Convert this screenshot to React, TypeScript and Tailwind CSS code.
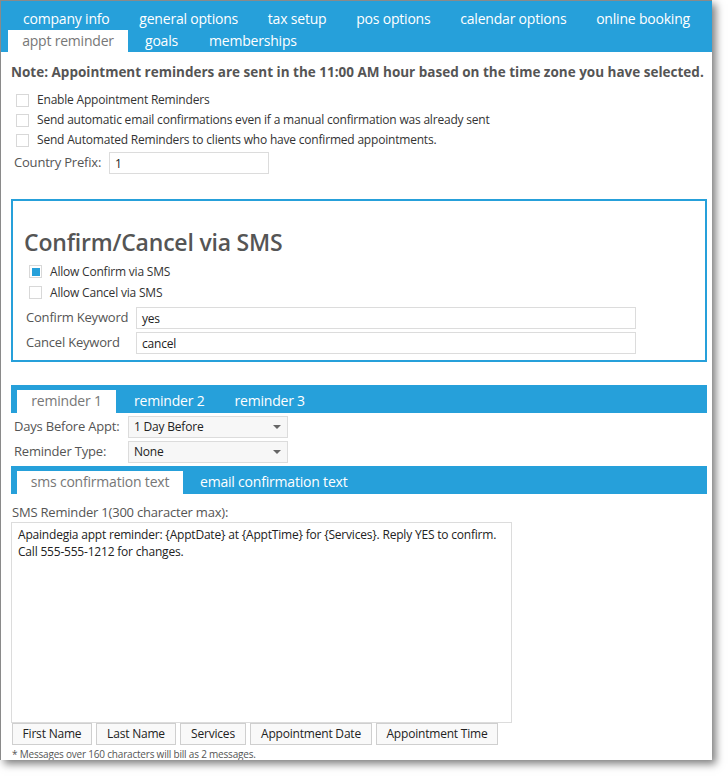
import React from "react";

const Cb = ({ checked = false }: { checked?: boolean }) => (
  <span className="inline-flex items-center justify-center w-[13px] h-[13px] border border-[#d8d8d8] bg-white mr-[8px] shrink-0">
    {checked && <span className="w-[8px] h-[8px] bg-[#26a0da]" />}
  </span>
);

const Sel = ({ v }: { v: string }) => (
  <div className="w-[160px] h-[22px] border border-[#dcdcdc] bg-[#f7f7f7] flex items-center justify-between pl-[5px] pr-[6px] text-[12px] text-[#222]">
    <span>{v}</span>
    <span className="w-0 h-0 border-l-[4px] border-r-[4px] border-t-[4px] border-l-transparent border-r-transparent border-t-[#666]" />
  </div>
);

export default function App() {
  const font = { fontFamily: '"Open Sans", "Noto Sans", sans-serif' };
  return (
    <div className="w-[728px] h-[776px] bg-white relative" style={font}>
      <div className="absolute left-0 top-0 w-[712px] h-[760px] border border-[#8a8a8a] border-r-0 border-b-0 shadow-[4px_4px_8px_rgba(0,0,0,0.5)] bg-white overflow-hidden tracking-[-0.2px]">
        {/* top tabs */}
        <div className="bg-[#26a0da] h-[51px] pt-[8px]">
          <div className="flex justify-between px-[22px] text-[14px] text-white leading-[19px] h-[20px]">
            {["company info", "general options", "tax setup", "pos options", "calendar options", "online booking"].map((t) => (
              <span key={t}>{t}</span>
            ))}
          </div>
          <div className="flex pl-[7px] mt-[1px] text-[14px] leading-[22px]">
            <span className="bg-white text-[#777] w-[120px] text-center h-[23px]">appt reminder</span>
            <span className="text-white ml-[17px]">goals</span>
            <span className="text-white ml-[31px]">memberships</span>
          </div>
        </div>
        <div className="pl-[10px] pt-[11px] text-[13.5px] font-bold text-[#555] leading-[18px] tracking-normal">
          Note: Appointment reminders are sent in the 11:00 AM hour based on the time zone you have selected.
        </div>
        <div className="pl-[15px] pt-[9px] text-[12px] text-[#333] leading-[20px]">
          <div className="flex items-center"><Cb />Enable Appointment Reminders</div>
          <div className="flex items-center"><Cb />Send automatic email confirmations even if a manual confirmation was already sent</div>
          <div className="flex items-center"><Cb />Send Automated Reminders to clients who have confirmed appointments.</div>
        </div>
        <div className="flex items-center pl-[13px] mt-[2px] text-[13px] text-[#555]">
          <span className="w-[95px]">Country Prefix:</span>
          <div className="w-[160px] h-[22px] border border-[#dcdcdc] pl-[5px] text-[12px] text-[#222] leading-[22px]">1</div>
        </div>
        {/* SMS box */}
        <div className="ml-[10px] mr-[5px] mt-[25px] h-[163px] border-2 border-[#26a0da] pl-[11px] pt-[27px]">
          <div className="text-[23px] font-semibold text-[#555] leading-[28px]">Confirm/Cancel via SMS</div>
          <div className="pl-[5px] pt-[5px] text-[12px] text-[#333] leading-[21px]">
            <div className="flex items-center"><Cb checked />Allow Confirm via SMS</div>
            <div className="flex items-center"><Cb />Allow Cancel via SMS</div>
          </div>
          <div className="flex items-center pl-[2px] mt-[4px] text-[13px] text-[#555]">
            <span className="w-[110px]">Confirm Keyword</span>
            <div className="w-[500px] h-[22px] border border-[#dcdcdc] pl-[5px] text-[12px] text-[#222] leading-[22px]">yes</div>
          </div>
          <div className="flex items-center pl-[2px] mt-[3px] text-[13px] text-[#555]">
            <span className="w-[110px]">Cancel Keyword</span>
            <div className="w-[500px] h-[22px] border border-[#dcdcdc] pl-[5px] text-[12px] text-[#222] leading-[22px]">cancel</div>
          </div>
        </div>
        {/* reminder tabs */}
        <div className="ml-[10px] mr-[5px] mt-[23px] h-[28px] bg-[#26a0da] flex items-end pl-[6px] text-[14px] leading-[22px]">
          <span className="bg-white text-[#777] w-[99px] h-[23px] text-center">reminder 1</span>
          <span className="text-white ml-[18px] h-[23px]">reminder 2</span>
          <span className="text-white ml-[30px] h-[23px]">reminder 3</span>
        </div>
        <div className="flex items-center pl-[13px] mt-[3px] text-[13px] text-[#555]">
          <span className="w-[114px]">Days Before Appt:</span>
          <Sel v="1 Day Before" />
        </div>
        <div className="flex items-center pl-[13px] mt-[3px] text-[13px] text-[#555]">
          <span className="w-[114px]">Reminder Type:</span>
          <Sel v="None" />
        </div>
        <div className="ml-[10px] mr-[5px] mt-[3px] h-[28px] bg-[#26a0da] flex items-end pl-[6px] text-[14px] leading-[22px]">
          <span className="bg-white text-[#777] w-[166px] h-[23px] text-center">sms confirmation text</span>
          <span className="text-white ml-[17px] h-[23px]">email confirmation text</span>
        </div>
        <div className="pl-[11px] mt-[9px] text-[13px] text-[#555] leading-[18px]">SMS Reminder 1(300 character max):</div>
        <div className="ml-[10px] mt-[1px] w-[501px] h-[201px] border border-[#dcdcdc] px-[6px] pt-[3px] text-[12px] text-[#222] leading-[17px]">
          Apaindegia appt reminder: {"{ApptDate}"} at {"{ApptTime}"} for {"{Services}"}. Reply YES to confirm.<br />Call 555-555-1212 for changes.
        </div>
        <div className="flex gap-[4px] pl-[11px] text-[12px] text-[#222]">
          {[["First Name", 80], ["Last Name", 80], ["Services", 66], ["Appointment Date", 122], ["Appointment Time", 122]].map(([t, w]) => (
            <div key={t as string} className="h-[22px] border border-[#cfcfcf] bg-[#f9f9f9] flex items-center justify-center" style={{ width: w as number }}>{t}</div>
          ))}
        </div>
        <div className="pl-[11px] text-[10px] text-[#555] leading-[14px] mt-[2px]">* Messages over 160 characters will bill as 2 messages.</div>
      </div>
    </div>
  );
}
